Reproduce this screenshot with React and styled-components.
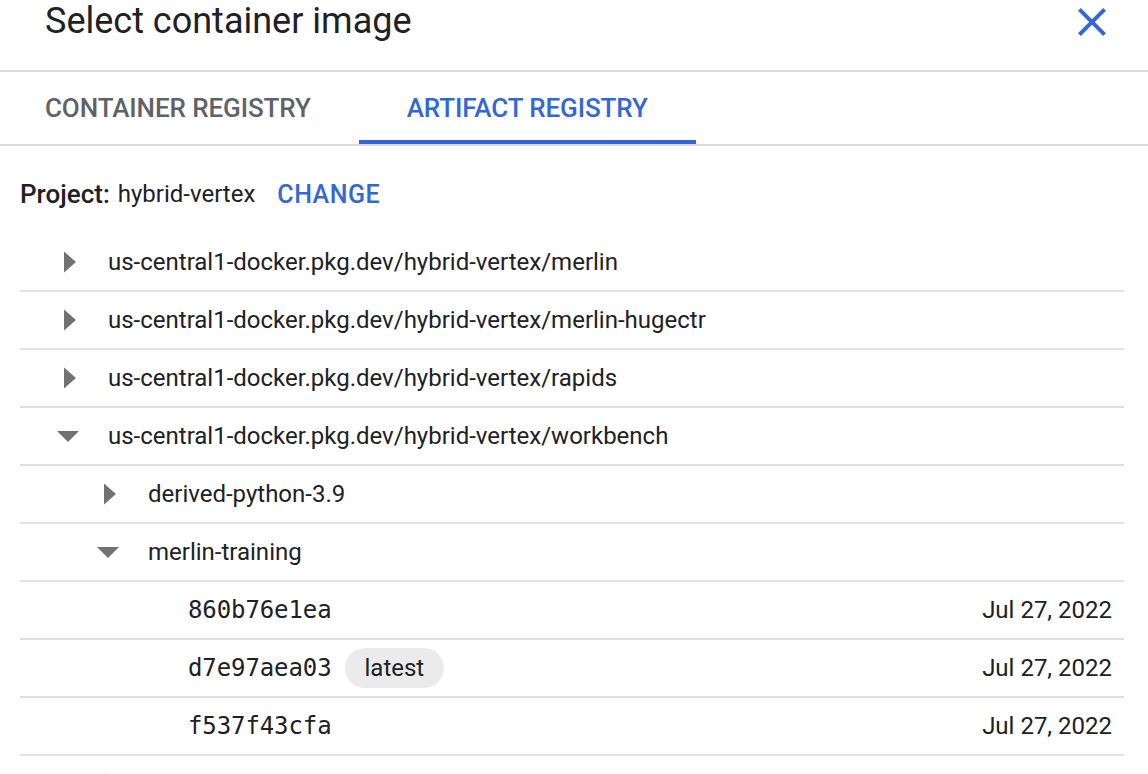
import React from "react";
import styled, { createGlobalStyle } from "styled-components";

const Global = createGlobalStyle`
  html, body { margin: 0; padding: 0; background: #fff; }
  body { font-family: Roboto, "Noto Sans", "Liberation Sans", sans-serif; color: #202124; overflow: hidden; }
`;

const BLUE = "#3367d6";

const Dialog = styled.div`
  width: 1148px;
  display: flex;
  flex-direction: column;
`;

const Header = styled.header`
  height: 70px;
  display: flex;
  align-items: flex-start;
  justify-content: space-between;
  padding: 0 32px 0 45px;
  border-bottom: 2px solid #dadce0;
`;

const Title = styled.h1`
  margin: 0;
  font-size: 36px;
  font-weight: 400;
  line-height: 42px;
  color: #202124;
`;

const CloseButton = styled.button`
  width: 48px;
  height: 48px;
  margin-top: -2px;
  padding: 0;
  border: 0;
  background: none;
  display: flex;
  align-items: center;
  justify-content: center;
  cursor: pointer;
`;

const TabBar = styled.div`
  display: flex;
  height: 72px;
  margin-left: -3px;
  border-bottom: 2px solid #dadce0;
`;

const Tab = styled.div`
  height: 72px;
  box-sizing: border-box;
  padding: 4px 48px 0;
  display: flex;
  align-items: center;
  font-size: 26px;
  font-weight: 500;
  letter-spacing: -0.1px;
  color: ${(p) => (p.$active ? BLUE : "#5f6368")};
  border-bottom: 4px solid ${(p) => (p.$active ? BLUE : "transparent")};
`;

const ProjectLine = styled.div`
  display: flex;
  align-items: center;
  height: 40px;
  margin: 28px 0 20px 20px;
  font-size: 24px;
`;

const ProjectLabel = styled.span`
  font-size: 26px;
  font-weight: 500;
  margin-right: 8px;
`;

const ChangeLink = styled.span`
  margin-left: 22px;
  color: ${BLUE};
  font-weight: 500;
  font-size: 25px;
  letter-spacing: 0.5px;
`;

const Tree = styled.div`
  margin: 0 24px 0 20px;
  display: flex;
  flex-direction: column;
`;

const Row = styled.div`
  height: 56px;
  display: flex;
  align-items: center;
  padding-left: ${(p) => 26 + p.$level * 40}px;
  padding-right: 12px;
  border-bottom: 2px solid #e0e0e0;
  font-size: 24px;
  color: #202124;
`;

const ArrowBox = styled.span`
  width: 48px;
  height: 48px;
  flex: 0 0 48px;
  margin-right: 14px;
  display: flex;
`;

const Label = styled.span`
  white-space: nowrap;
`;

const Digest = styled.span`
  font-family: "DejaVu Sans Mono", "Liberation Mono", monospace;
  font-size: 24px;
  letter-spacing: -0.1px;
  white-space: nowrap;
`;

const Chip = styled.span`
  margin-left: 13px;
  height: 40px;
  padding: 0 20px;
  border-radius: 20px;
  background: #ebebeb;
  display: inline-flex;
  align-items: center;
  font-size: 24px;
`;

const DateCell = styled.span`
  margin-left: auto;
  white-space: nowrap;
`;

const Arrow = ({ open }) => (
  <svg width="48" height="48" viewBox="0 0 48 48">
    {open ? (
      <polygon points="11,19 33,19 22,30" fill="#727272" />
    ) : (
      <polygon points="18,13.5 30,24 18,34.5" fill="#727272" />
    )}
  </svg>
);

const CloseIcon = () => (
  <svg width="48" height="48" viewBox="0 0 24 24">
    <path
      fill={BLUE}
      d="M19 6.41L17.59 5 12 10.59 6.41 5 5 6.41 10.59 12 5 17.59 6.41 19 12 13.41 17.59 19 19 17.59 13.41 12z"
    />
  </svg>
);

const rows = [
  { level: 0, arrow: "closed", label: "us-central1-docker.pkg.dev/hybrid-vertex/merlin" },
  { level: 0, arrow: "closed", label: "us-central1-docker.pkg.dev/hybrid-vertex/merlin-hugectr" },
  { level: 0, arrow: "closed", label: "us-central1-docker.pkg.dev/hybrid-vertex/rapids" },
  { level: 0, arrow: "open", label: "us-central1-docker.pkg.dev/hybrid-vertex/workbench" },
  { level: 1, arrow: "closed", label: "derived-python-3.9" },
  { level: 1, arrow: "open", label: "merlin-training" },
  { level: 2, digest: "860b76e1ea", date: "Jul 27, 2022" },
  { level: 2, digest: "d7e97aea03", tag: "latest", date: "Jul 27, 2022" },
  { level: 2, digest: "f537f43cfa", date: "Jul 27, 2022" },
  { level: 1, arrow: "closed" },
];

export default function App() {
  return (
    <Dialog>
      <Global />
      <Header>
        <Title>Select container image</Title>
        <CloseButton aria-label="Close">
          <CloseIcon />
        </CloseButton>
      </Header>
      <TabBar>
        <Tab>CONTAINER REGISTRY</Tab>
        <Tab $active>ARTIFACT REGISTRY</Tab>
      </TabBar>
      <ProjectLine>
        <ProjectLabel>Project:</ProjectLabel>
        <span>hybrid-vertex</span>
        <ChangeLink>CHANGE</ChangeLink>
      </ProjectLine>
      <Tree>
        {rows.map((r, i) => (
          <Row key={i} $level={r.level}>
            <ArrowBox>{r.arrow && <Arrow open={r.arrow === "open"} />}</ArrowBox>
            {r.label && <Label>{r.label}</Label>}
            {r.digest && <Digest>{r.digest}</Digest>}
            {r.tag && <Chip>{r.tag}</Chip>}
            {r.date && <DateCell>{r.date}</DateCell>}
          </Row>
        ))}
      </Tree>
    </Dialog>
  );
}
